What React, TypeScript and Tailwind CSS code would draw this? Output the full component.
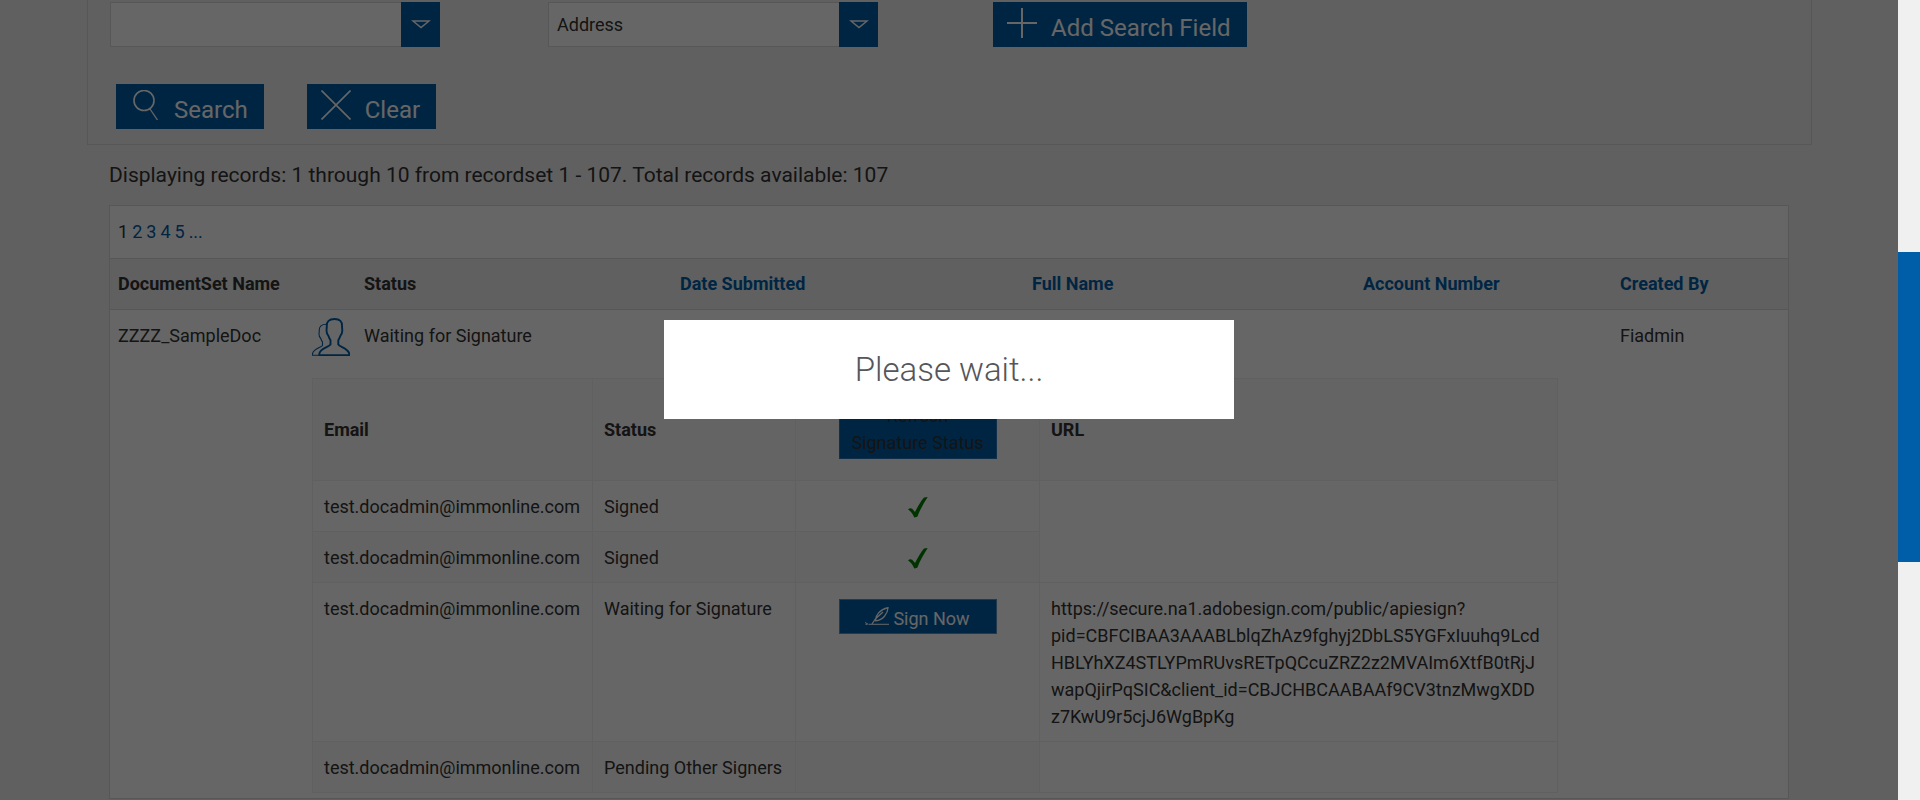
import type { ReactNode } from "react";

const fieldOptions = ["Address", "Account Number", "Email", "Full Name"];

const signers = [
  { email: "test.docadmin@immonline.com", status: "Signed" },
  { email: "test.docadmin@immonline.com", status: "Signed" },
  {
    email: "test.docadmin@immonline.com",
    status: "Waiting for Signature",
    url: "https://secure.na1.adobesign.com/public/apiesign?pid=CBFCIBAA3AAABLblqZhAz9fghyj2DbLS5YGFxIuuhq9LcdHBLYhXZ4STLYPmRUvsRETpQCcuZRZ2z2MVAIm6XtfB0tRjJwapQjirPqSIC&client_id=CBJCHBCAABAAf9CV3tnzMwgXDDz7KwU9r5cjJ6WgBpKg",
  },
  { email: "test.docadmin@immonline.com", status: "Pending Other Signers" },
];

function SearchIcon() {
  return (
    <svg viewBox="0 0 30 30" className="h-[30px] w-[30px]" fill="none" stroke="currentColor">
      <circle cx="14" cy="10.5" r="10" strokeWidth="1.6" />
      <path d="M20 19l7.5 11" strokeWidth="1.3" />
    </svg>
  );
}

function CloseIcon() {
  return (
    <svg viewBox="0 0 30 30" className="h-[30px] w-[30px]" fill="none" stroke="currentColor" strokeWidth="1.6">
      <path d="M.5.5l29 29M29.5.5l-29 29" />
    </svg>
  );
}

function PlusIcon() {
  return (
    <svg viewBox="0 0 30 30" className="h-[30px] w-[30px]" fill="none" stroke="currentColor" strokeWidth="2">
      <path d="M15 0v30M0 15h30" />
    </svg>
  );
}

function PeopleIcon() {
  return (
    <svg viewBox="0 0 38 38" className="h-[38px] w-[38px] text-[#005ea8]" fill="none" stroke="currentColor">
      <path
        strokeWidth="1.9"
        d="M22.5 1c-5.5 0-8 2.4-7.7 7.4l-.3 4c0 2.500.7 4 2 5.600.6 2 1.300 3 2 4.200v4.300c-1.500 2.500-11 4-11.200 9.500v1.100h30V36c-.5-5.500-9.500-7-11-9.500v-4.300c.7-1.200 1.500-2.200 2-4.200 1.300-1.600 2-3.100 2-5.600l-.3-4C30.300 3.400 28 1 22.500 1z"
      />
      <path
        strokeWidth="1.1"
        d="M14.500 6.300c-5 0-7.500 2-7.200 6.200l-.3 3.500c0 2 .7 3.500 1.800 4.500.5 1.700 1 2.500 1.700 3.500v3.500c-1.500 2-9.800 3.500-10 8.500v1.200h7"
      />
    </svg>
  );
}

function CheckIcon() {
  return (
    <svg viewBox="0 0 20 21" className="mx-auto h-[21px] w-5" fill="#008000">
      <path d="M0 12.300C1.500 11 3 10.700 4.200 11.800L7 15C9.500 10 12.500 4.500 16 .5L19.700 0C15.800 6 12 12.800 9.300 19.800L6.300 20.500C4.800 17 2.800 14.300 0 12.300z" />
    </svg>
  );
}

function QuillIcon() {
  return (
    <svg viewBox="0 0 24 18" className="h-[18px] w-6" fill="none" stroke="currentColor">
      <path d="M3.500 17.300H24" strokeWidth="1" />
      <path d="M0 15.500l2.800 1.500-2.300.6" strokeWidth="1" />
      <path d="M7 17l3.800-5.500L18 5M10.800 13.800C10 8.500 15 2.500 23 .7c-.3 6-5 12.300-12.200 13.100z" strokeWidth="1.300" />
    </svg>
  );
}

function SearchSelect({ label, value }: { label: string; value: string }) {
  return (
    <div className="relative h-[45px] w-[330px]">
      <select
        aria-label={label}
        defaultValue={value}
        className="h-full w-full appearance-none border border-[#d9d9d9] bg-white px-2 text-lg text-[#333]"
      >
        <option value=""></option>
        {fieldOptions.map((option) => (
          <option key={option}>{option}</option>
        ))}
      </select>
      <span className="pointer-events-none absolute inset-y-0 right-0 flex w-[39px] items-center justify-center bg-[#005ea8] text-white">
        <svg viewBox="0 0 20 9" className="h-[9px] w-5" fill="none" stroke="currentColor" strokeWidth="1.500">
          <path d="M2 1h16l-8 6.500z" />
        </svg>
      </span>
    </div>
  );
}

function ActionButton({ icon, children }: { icon: ReactNode; children: ReactNode }) {
  return (
    <button className="flex h-[45px] items-start gap-3.5 bg-[#005ea8] pt-1.5 pr-4 pl-3.5 text-2xl text-white">
      {icon}
      <span className="pt-1">{children}</span>
    </button>
  );
}

function SearchPanel() {
  return (
    <section className="mr-[86px] ml-[87px] border border-t-0 border-[#d9d9d9] px-[22px] pt-0.5 pb-[15px]">
      <div className="flex">
        <div className="w-[438px]">
          <SearchSelect label="Search value" value="" />
        </div>
        <div className="w-[445px]">
          <SearchSelect label="Search field" value="Address" />
        </div>
        <ActionButton icon={<PlusIcon />}>Add Search Field</ActionButton>
      </div>
      <div className="mt-[37px] flex gap-[43px] pl-1.5">
        <ActionButton icon={<SearchIcon />}>Search</ActionButton>
        <ActionButton icon={<CloseIcon />}>Clear</ActionButton>
      </div>
    </section>
  );
}

function SignerTable() {
  return (
    <table className="w-full max-w-[1246px] table-fixed border-collapse text-left [&_td]:border [&_td]:border-[#f0f0f0] [&_td]:px-[11px] [&_td]:pt-3 [&_td]:pb-[11px] [&_td]:align-top [&_th]:border [&_th]:border-[#f0f0f0] [&_th]:px-[11px]">
      <colgroup>
        <col className="w-[280px]" />
        <col className="w-[203px]" />
        <col className="w-[244px]" />
        <col />
      </colgroup>
      <thead>
        <tr className="h-[102px] bg-[#f9f9f9]">
          <th>Email</th>
          <th>Status</th>
          <th>
            <button className="mx-auto block w-[158px] border border-[#2b76b5] bg-[#005ea8] px-2 py-0.5 font-normal">
              Refresh Signature Status
            </button>
          </th>
          <th>URL</th>
        </tr>
      </thead>
      <tbody>
        {signers.map((signer, i) => (
          <tr key={i}>
            <td className={i % 2 ? "bg-[#f9f9f9]" : ""}>{signer.email}</td>
            <td className={i % 2 ? "bg-[#f9f9f9]" : ""}>{signer.status}</td>
            <td className={i % 2 ? "bg-[#f9f9f9]" : ""}>
              {signer.status === "Signed" && (
                <div className="pt-1">
                  <CheckIcon />
                </div>
              )}
              {signer.url && (
                <button className="mx-auto mt-1 flex h-[35px] w-[158px] items-center justify-center gap-1 border border-[#5b8fbb] bg-[#005ea8] text-white">
                  <QuillIcon />
                  <span className="pt-1">Sign Now</span>
                </button>
              )}
            </td>
            {i === 0 && <td rowSpan={2}></td>}
            {i > 1 && (
              <td>
                <div className="pr-1 wrap-break-word">{signer.url}</div>
              </td>
            )}
          </tr>
        ))}
      </tbody>
    </table>
  );
}

function ResultsTable() {
  return (
    <div className="mx-[109px] border border-[#d9d9d9] bg-white text-lg leading-[27px]">
      <nav className="flex gap-1 border-b border-[#d9d9d9] px-2 pt-3 pb-[13px] text-[#005ea8]">
        <span className="text-[#333]">1</span>
        <a href="#page-2">2</a>
        <a href="#page-3">3</a>
        <a href="#page-4">4</a>
        <a href="#page-5">5</a>
        <a href="#page-6">...</a>
      </nav>
      <table className="w-full table-fixed border-collapse text-left">
        <colgroup>
          <col className="w-[194px]" />
          <col className="w-[52px]" />
          <col className="w-[316px]" />
          <col />
          <col className="w-[331px]" />
          <col className="w-[257px]" />
          <col className="w-[176px]" />
        </colgroup>
        <thead>
          <tr className="border-b border-[#d9d9d9] bg-[#f0f0f0] [&>th]:px-2 [&>th]:pt-[11px] [&>th]:pb-3">
            <th>DocumentSet Name</th>
            <th></th>
            <th>Status</th>
            <th>
              <a href="#date" className="text-[#005ea8]">Date Submitted</a>
            </th>
            <th>
              <a href="#name" className="text-[#005ea8]">Full Name</a>
            </th>
            <th>
              <a href="#account" className="text-[#005ea8]">Account Number</a>
            </th>
            <th>
              <a href="#created" className="text-[#005ea8]">Created By</a>
            </th>
          </tr>
        </thead>
        <tbody>
          <tr className="h-14 align-top [&>td]:px-2 [&>td]:pt-3">
            <td>ZZZZ_SampleDoc</td>
            <td>
              <div className="-mt-1 w-[38px]">
                <PeopleIcon />
              </div>
            </td>
            <td>Waiting for Signature</td>
            <td></td>
            <td></td>
            <td></td>
            <td>Fiadmin</td>
          </tr>
          <tr>
            <td></td>
            <td colSpan={5} className="px-2 pt-3 pb-[5px]">
              <SignerTable />
            </td>
            <td></td>
          </tr>
        </tbody>
      </table>
    </div>
  );
}

function WaitDialog() {
  return (
    <div className="absolute inset-0 flex items-start justify-center bg-black/60 pt-80">
      <div
        role="dialog"
        aria-label="Please wait"
        className="w-[30%] bg-white py-[27px] text-center text-[33px] leading-[45px] font-light text-[#54565b]"
      >
        Please wait...
      </div>
    </div>
  );
}

export default function App() {
  return (
    <div className="flex h-screen bg-[#f0f0f0] font-[Roboto,sans-serif] text-[#333]">
      <div className="relative min-w-0 flex-1 overflow-hidden">
        <main>
          <SearchPanel />
          <p className="mx-[109px] pt-[15px] pb-[15px] text-[21px] leading-[30px]">
            Displaying records: 1 through 10 from recordset 1 - 107. Total records available: 107
          </p>
          <ResultsTable />
        </main>
        <WaitDialog />
      </div>
      <div className="w-[22px] pt-[252px]">
        <div className="h-[310px] bg-[#005ea8]" />
      </div>
    </div>
  );
}
